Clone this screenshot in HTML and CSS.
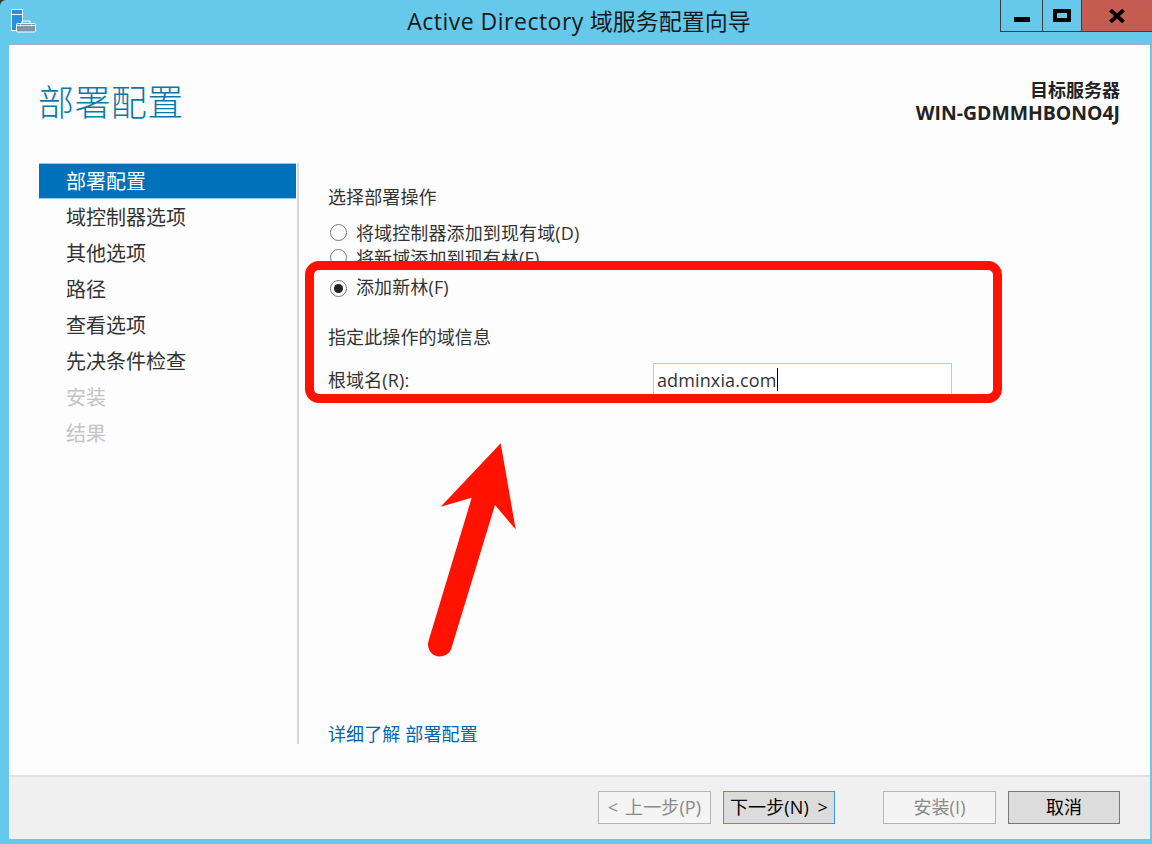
FILE: index.html
```html
<!DOCTYPE html>
<html lang="zh-CN">
<head>
<meta charset="utf-8">
<title>Active Directory 域服务配置向导</title>
<link rel="stylesheet" href="styles.css">
</head>
<body>
<div class="window">
  <header class="titlebar">
    <svg class="app-icon" width="26" height="26" viewBox="0 0 26 26">
      <rect x="0.5" y="0.5" width="11" height="21" fill="#2a8fdd" stroke="#fff"/>
      <path d="M1 5.5h10" stroke="#fff"/>
      <rect x="5.5" y="14.5" width="19" height="8.5" rx="1" fill="#7d95a8" stroke="#fff"/>
      <path d="M11 14v-2h8v2" fill="none" stroke="#fff"/>
      <path d="M6 16.5h18M9.5 15.5v2M20.5 15.5v2" stroke="#fff" stroke-width="0.8"/>
    </svg>
    <div class="title"><span class="title-latin">Active Directory</span> 域服务配置向导</div>
    <div class="caption">
      <div class="cap-btn cap-min"><span class="min-glyph"></span></div>
      <div class="cap-btn cap-max"><span class="max-glyph"></span></div>
      <div class="cap-btn cap-close">
        <svg width="16" height="14" viewBox="0 0 16 14"><path d="M1.5 1l13 12M14.5 1l-13 12" stroke="#000" stroke-width="3.8"/></svg>
      </div>
    </div>
  </header>

  <main class="content">
    <div class="head">
      <h1 class="page-title">部署配置</h1>
      <div class="target">
        <div>目标服务器</div>
        <div class="target-name">WIN-GDMMHBONO4J</div>
      </div>
    </div>
    <div class="body-row">
      <nav class="steps">
        <div class="step step-active">部署配置</div>
        <div class="step">域控制器选项</div>
        <div class="step">其他选项</div>
        <div class="step">路径</div>
        <div class="step">查看选项</div>
        <div class="step">先决条件检查</div>
        <div class="step step-off">安装</div>
        <div class="step step-off">结果</div>
      </nav>
      <section class="pane">
        <div class="pane-top">
          <div class="label section-label">选择部署操作</div>
          <div class="radio-row"><span class="radio"></span><span>将域控制器添加到现有域(D)</span></div>
          <div class="radio-row"><span class="radio"></span><span>将新域添加到现有林(F)</span></div>
          <div class="callout">
            <div class="radio-row"><span class="radio radio-on"></span><span class="radio-text-up">添加新林(F)</span></div>
            <div class="label info-label">指定此操作的域信息</div>
            <div class="field-row">
              <label class="field-label">根域名(R):</label>
              <div class="input"><span>adminxia.com</span><span class="caret"></span></div>
            </div>
          </div>
        </div>
        <a class="more-link" href="#">详细了解 部署配置</a>
      </section>
    </div>
  </main>

  <footer class="footer">
    <div class="btn btn-off btn-wide">&lt; 上一步(P)</div>
    <div class="btn btn-focus">下一步(N) &gt;</div>
    <div class="btn btn-off btn-wide btn-install">安装(I)</div>
    <div class="btn btn-cancel">取消</div>
  </footer>
</div>

<svg class="arrow" width="1152" height="844" viewBox="0 0 1152 844">
  <path fill="#ff1300" d="M500.7 443.3L515.7 529.5L495 505L451.5 648a11.8 11.8 0 0 1-23-7L471.7 497.7L440.7 506.7Z"/>
</svg>
</body>
</html>
```
FILE: styles.css
```css
* { box-sizing: border-box; }
html, body { margin: 0; padding: 0; height: 100%; background: #3a3a3a; }
body {
  font-family: "Open Sans", "Noto Sans CJK SC", sans-serif;
  font-size: 18px;
  letter-spacing: 0.12px;
  color: #333;
  overflow: hidden;
}
.window {
  width: 1152px;
  height: 844px;
  background: #66c9eb;
  border-radius: 6px 6px 0 0;
  display: flex;
  flex-direction: column;
  padding: 0 2px 5px 9px;
}
.titlebar {
  height: 44px;
  flex: none;
  display: flex;
  position: relative;
  margin-left: -9px;
  margin-right: -2px;
  justify-content: center;
  align-items: flex-start;
}
.app-icon { position: absolute; left: 11px; top: 9px; }
.title {
  font-size: 23px;
  line-height: 42px;
  letter-spacing: 0;
  color: #1a1a1a;
  margin-left: 6px;
}
.title-latin { letter-spacing: 0.5px; }
.caption { position: absolute; right: 0; top: 0; display: flex; height: 32px; }
.cap-btn {
  height: 32px;
  display: flex;
  align-items: center;
  justify-content: center;
  border-left: 1px solid #3c3c3c;
  border-bottom: 1px solid #3c3c3c;
}
.cap-min { width: 42px; }
.cap-max { width: 39px; }
.cap-close { width: 71px; background: #c45c52; }
.min-glyph { width: 16px; height: 5px; background: #000; margin-top: 8px; }
.max-glyph { width: 18px; height: 13px; border: 4px solid #000; }

.content {
  flex: 1;
  background: #fdfdfd;
  display: flex;
  flex-direction: column;
  border-top: 1px solid #a6b4bb;
  min-height: 0;
}
.head {
  height: 118px;
  flex: none;
  display: flex;
  justify-content: space-between;
  padding: 0 30px 0 30px;
}
.page-title {
  margin: 30px 0 0 -1px;
  font-size: 36px;
  font-weight: 300;
  line-height: 56px;
  letter-spacing: 0.4px;
  color: #0a78a8;
}
.target {
  margin-top: 33px;
  text-align: right;
  font-weight: 700;
  font-size: 18px;
  line-height: 24px;
  letter-spacing: 0;
  color: #222;
}
.target-name { font-size: 19.4px; line-height: 22px; }
.body-row { flex: 1; display: flex; padding-left: 30px; min-height: 0; }
.steps { width: 260px; flex: none; height: 581px; border-right: 2px solid #d6d6d6; }
.step {
  height: 36px;
  width: 257px;
  padding: 1px 0 0 27px;
  font-size: 20px;
  line-height: 36px;
  letter-spacing: 0;
  color: #333;
}
.step-active { background: #0072bc; color: #fff; border-top: 1px solid #9cc7e4; border-bottom: 1px solid #9cc7e4; padding-top: 0; line-height: 35px; }
.step-off { color: #c4c4c4; }
.pane { flex: 1; padding: 21px 0 0 0; position: relative; display: flex; flex-direction: column; height: 590px; }
.pane-top { flex: 1; }
.label { line-height: 26px; color: #333; }
.section-label { margin-left: 29px; height: 36px; }
.radio-row {
  display: flex;
  align-items: center;
  gap: 9px;
  height: 25px;
  line-height: 26px;
  margin-left: 31px;
}
.radio {
  width: 17px;
  height: 17px;
  flex: none;
  border: 1px solid #777;
  border-radius: 50%;
  background: #fff;
  position: relative;
}
.radio-on::after {
  content: "";
  position: absolute;
  left: 3px;
  top: 3px;
  width: 9px;
  height: 9px;
  border-radius: 50%;
  background: #222;
}
.radio-text-up { margin-bottom: 2px; }
.callout {
  position: relative;
  width: 697px;
  height: 142px;
  margin: -9px 0 0 6px;
  border: 9px solid #ff1300;
  border-radius: 14px;
  background: #fdfdfd;
  padding-top: 5px;
}
.callout .radio-row { margin-left: 16px; height: 26px; }
.info-label { margin: 23px 0 0 14px; }
.field-row { display: flex; margin-top: 13px; height: 31px; }
.field-label { margin-left: 14px; width: 325px; flex: none; line-height: 34px; color: #333; }
.input {
  width: 299px;
  height: 31px;
  flex: none;
  background: #fff;
  border: 1px solid #a9cfee;
  border-bottom: 0;
  padding-left: 3px;
  line-height: 32px;
  color: #333;
  display: flex;
  align-items: flex-start;
}
.caret { width: 1px; height: 23px; background: #000; margin-top: 4px; }
.more-link {
  position: absolute;
  left: 29px;
  top: 558px;
  color: #0066b4;
  text-decoration: none;
  line-height: 26px;
}
.footer {
  height: 64px;
  flex: none;
  background: #f0f0f0;
  border-top: 2px solid #e0e0e0;
  display: flex;
  align-items: flex-start;
  padding: 14px 0 0 589px;
  gap: 12px;
}
.btn {
  width: 112px;
  height: 33px;
  flex: none;
  text-align: center;
  font-size: 18px;
  line-height: 31px;
  word-spacing: 2px;
  border: 1px solid #adadad;
  background: #e1e1e1;
  color: #000;
}
.btn-wide { width: 113px; }
.btn-off { background: #f4f4f4; color: #8a8a8a; border-color: #b5b5b5; }
.btn-focus { background: #dcdcdc; border-color: #3f96e8; word-spacing: 4px; }
.btn-install { margin-left: 36px; }
.btn-cancel { background: #dcdcdc; border-color: #777; }
.arrow { position: absolute; left: 0; top: 0; pointer-events: none; }
```
